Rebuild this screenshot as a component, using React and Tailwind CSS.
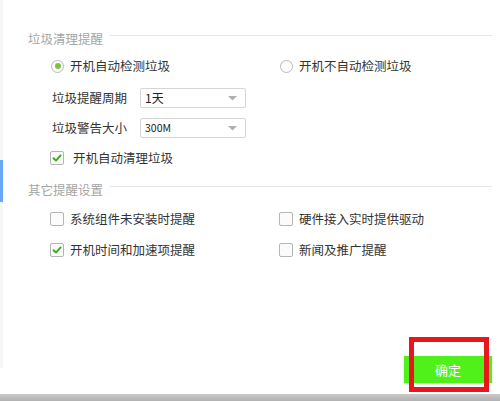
import React from 'react'

const FONT = { fontFamily: '"Noto Sans CJK SC", "Noto Sans", sans-serif' }

function Radio({ checked, label }) {
  return (
    <div className="flex items-center h-[14px] gap-[6px]">
      <span className="w-[13px] h-[13px] rounded-full border border-[#b9b9b9] bg-white flex items-center justify-center">
        {checked && <span className="w-[6px] h-[6px] rounded-full bg-[#7cc242]" />}
      </span>
      <span className="text-[12.5px] leading-[14px] text-[#333]">{label}</span>
    </div>
  )
}

function Checkbox({ checked, label, gap = 'gap-[6px]' }) {
  return (
    <div className={`flex items-center h-[14px] ${gap}`}>
      <span className="w-[14px] h-[14px] rounded-[2px] border border-[#b5b5b5] bg-[#fbfbfb] flex items-center justify-center">
        {checked && (
          <svg width="10" height="10" viewBox="0 0 10 10">
            <path d="M1.5 5.2 L4 7.6 L8.6 2.4" fill="none" stroke="#3aa91f" strokeWidth="1.9" strokeLinecap="round" strokeLinejoin="round" />
          </svg>
        )}
      </span>
      <span className="text-[12.5px] leading-[14px] text-[#333]">{label}</span>
    </div>
  )
}

function SectionTitle({ children }) {
  return (
    <div className="flex items-start h-[14px]">
      <span className="text-[12.5px] leading-[14px] text-[#a5a5a5] w-[82px]">{children}</span>
      <div className="flex-1 h-px bg-[#e6e6e6] mt-[3px] mr-[8px]" />
    </div>
  )
}

function SelectRow({ label, value, valueClass }) {
  return (
    <div className="flex items-center h-[20px] ml-[24px]">
      <span className="w-[88px] text-[12.5px] text-[#333]">{label}</span>
      <div className="w-[106px] h-[20px] border border-[#d6d6d6] rounded-[2px] bg-white flex items-center justify-between pl-[4px] pr-[8px]">
        <span className={valueClass}>{value}</span>
        <svg width="9" height="5" viewBox="0 0 9 5">
          <path d="M0 0 H9 L4.5 4.5 Z" fill="#b0b0b0" />
        </svg>
      </div>
    </div>
  )
}

export default function App() {
  return (
    <div className="w-[500px] h-[401px] bg-white flex flex-col overflow-hidden" style={FONT}>
      <div className="flex-1 flex">
        {/* left strip */}
        <div className="w-[3px] h-[368px] bg-[#f6f6f6] flex flex-col">
          <div className="mt-[160px] h-[42px] bg-[#6aa6f7]" />
        </div>

        <div className="flex-1 flex flex-col pl-[25px]">
          <div className="mt-[32px]">
            <SectionTitle>垃圾清理提醒</SectionTitle>
          </div>

          <div className="mt-[13px] grid grid-cols-[229px_1fr] ml-[23px]">
            <Radio checked label="开机自动检测垃圾" />
            <Radio label="开机不自动检测垃圾" />
          </div>

          <div className="mt-[15px]">
            <SelectRow label="垃圾提醒周期" value="1天" valueClass="text-[12px] text-[#222]" />
          </div>
          <div className="mt-[10px]">
            <SelectRow
              label="垃圾警告大小"
              value="300M"
              valueClass="text-[10.5px] text-[#222]"
            />
          </div>

          <div className="mt-[13px] ml-[22px]">
            <Checkbox checked label="开机自动清理垃圾" gap="gap-[9px]" />
          </div>

          <div className="mt-[18px]">
            <SectionTitle>其它提醒设置</SectionTitle>
          </div>

          <div className="mt-[15px] ml-[22px] grid grid-cols-[229px_1fr] gap-y-[17px]">
            <Checkbox label="系统组件未安装时提醒" />
            <Checkbox label="硬件接入实时提供驱动" />
            <Checkbox checked label="开机时间和加速项提醒" />
            <Checkbox label="新闻及推广提醒" />
          </div>

          <div className="mt-auto flex justify-end pr-[8px] pb-[11px]">
            <div className="relative">
              <button className="w-[88px] h-[27px] bg-[#50f01b] text-white text-[13px] shadow-[0_1px_2px_rgba(0,0,0,0.15)]">
                确定
              </button>
              <div className="absolute left-[5px] top-[-19px] w-[80px] h-[55px] border-[5px] border-[#e8161d]" />
            </div>
          </div>
        </div>
      </div>
      <div className="h-[7px] bg-gradient-to-b from-[#c9c9c9] to-[#b1b1b1]" />
    </div>
  )
}
